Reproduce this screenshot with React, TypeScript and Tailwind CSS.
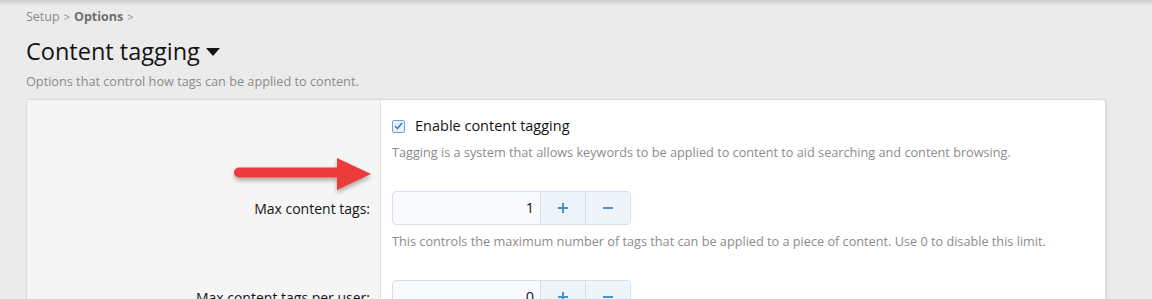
import React from 'react';

function Chevron() {
  return <span className="mx-[4px] text-[11px] text-[#8c8c8c]">&gt;</span>;
}

function Stepper({ value }: { value: string }) {
  return (
    <div className="flex h-[34px] w-[239px] overflow-hidden rounded-[4px] border border-[#d6dfe9] bg-[#f8fafd]">
      <div className="flex flex-1 items-center justify-end pr-[6px] text-[14.5px] text-[#141414]">{value}</div>
      <button className="flex w-[45px] items-center justify-center border-l border-[#d6dfe9] bg-[#eef4fa]">
        <svg width="12" height="12" viewBox="0 0 12 12">
          <path d="M6 1v10M1 6h10" stroke="#4a8fcf" strokeWidth="2" />
        </svg>
      </button>
      <button className="flex w-[45px] items-center justify-center border-l border-[#d6dfe9] bg-[#eef4fa]">
        <svg width="12" height="12" viewBox="0 0 12 12">
          <path d="M1 6h10" stroke="#4a8fcf" strokeWidth="2" />
        </svg>
      </button>
    </div>
  );
}

export default function App() {
  return (
    <div className="relative h-[299px] w-full overflow-hidden bg-[#ebebeb] font-['Open_Sans',sans-serif]">
      <div className="pointer-events-none absolute inset-x-0 top-0 h-[6px] bg-gradient-to-b from-[#cfcfcf] to-[#ebebeb]" />
      <div className="px-[26px] pt-[9px]">
        <div className="flex items-center text-[12.5px] leading-[16px] text-[#8c8c8c]">
          <span>Setup</span>
          <Chevron />
          <span className="font-bold text-[#6e6e6e]">Options</span>
          <Chevron />
        </div>
        <div className="mt-[10px] flex items-center gap-[6px]">
          <h1 className="text-[23.5px] leading-[32px] text-[#141414]">Content tagging</h1>
          <svg width="14" height="8" viewBox="0 0 14 8" className="mt-[2px]">
            <path d="M0 0h14L7 8z" fill="#141414" />
          </svg>
        </div>
        <p className="mt-[6px] text-[12.7px] leading-[16px] text-[#8c8c8c]">
          Options that control how tags can be applied to content.
        </p>
        <div className="relative mt-[10px] w-[1080px] rounded-t-[4px] border border-b-0 border-[#dcdcdc] bg-white shadow-[1px_0_2px_rgba(0,0,0,0.08)]">
          <div className="grid grid-cols-[354px_1fr]">
            <div className="border-r border-[#e0e0e0] bg-[#f5f5f5]" />
            <div className="px-[11px] pb-[15px] pt-[15px]">
              <label className="flex h-[22px] items-center gap-[10px] text-[14.5px] text-[#141414]">
                <span className="flex h-[13px] w-[13px] items-center justify-center rounded-[2px] border border-[#6aa3d8] bg-[#e8f1fa]">
                  <svg width="9" height="8" viewBox="0 0 9 8">
                    <path d="M1 4l2.5 2.5L8 1" stroke="#3c82c8" strokeWidth="1.6" fill="none" />
                  </svg>
                </span>
                Enable content tagging
              </label>
              <p className="mt-[6px] text-[12.7px] leading-[18px] text-[#8c8c8c]">
                Tagging is a system that allows keywords to be applied to content to aid searching and content browsing.
              </p>
            </div>
          </div>
          <div className="grid grid-cols-[354px_1fr]">
            <div className="border-r border-[#e0e0e0] bg-[#f5f5f5] py-[15px] pr-[10px]">
              <div className="flex h-[34px] items-center justify-end text-[14px] text-[#141414]">Max content tags:</div>
            </div>
            <div className="px-[11px] py-[15px]">
              <Stepper value="1" />
              <p className="mt-[7px] text-[12.7px] leading-[18px] text-[#8c8c8c]">
                This controls the maximum number of tags that can be applied to a piece of content. Use 0 to disable this limit.
              </p>
            </div>
          </div>
          <div className="grid grid-cols-[354px_1fr]">
            <div className="border-r border-[#e0e0e0] bg-[#f5f5f5] py-[15px] pr-[10px]">
              <div className="flex h-[34px] items-center justify-end text-[14px] text-[#141414]">Max content tags per user:</div>
            </div>
            <div className="px-[11px] py-[15px]">
              <Stepper value="0" />
            </div>
          </div>
          <svg
            className="pointer-events-none absolute left-[204px] top-[56px]"
            width="146"
            height="42"
            viewBox="0 0 146 42"
          >
            <defs>
              <filter id="sh" x="-10%" y="-30%" width="120%" height="170%">
                <feDropShadow dx="0" dy="3" stdDeviation="2" floodColor="#000" floodOpacity="0.3" />
              </filter>
            </defs>
            <g filter="url(#sh)">
              <path d="M8 16.5h102" stroke="#ec3b3b" strokeWidth="10" strokeLinecap="round" />
              <path d="M106 2L140 18L106 34z" fill="#ec3b3b" />
            </g>
          </svg>
        </div>
      </div>
    </div>
  );
}
